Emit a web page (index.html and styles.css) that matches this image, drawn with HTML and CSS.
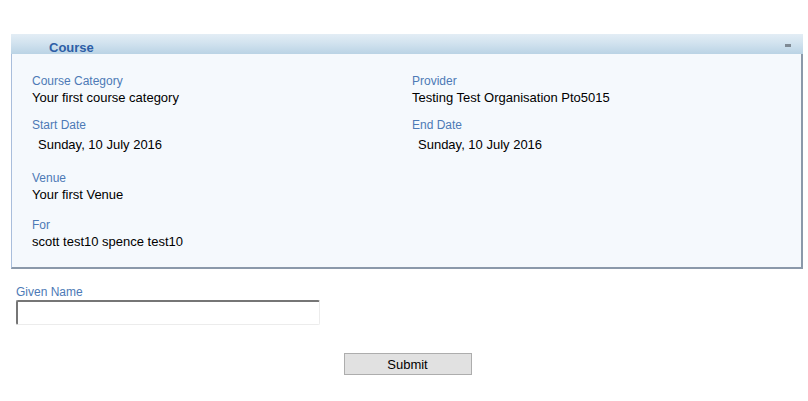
FILE: index.html
```html
<!DOCTYPE html>
<html lang="en">
<head>
<meta charset="utf-8">
<title>Course</title>
<link rel="stylesheet" href="styles.css">
</head>
<body>
<div class="page">
  <section class="panel">
    <header class="panel-head">
      <span class="panel-title">Course</span>
      <span class="collapse" aria-label="collapse"></span>
    </header>
    <div class="panel-body">
      <div class="row">
        <div class="field">
          <div class="label">Course Category</div>
          <div class="value">Your first course category</div>
        </div>
        <div class="field">
          <div class="label">Provider</div>
          <div class="value">Testing Test Organisation Pto5015</div>
        </div>
      </div>
      <div class="row">
        <div class="field">
          <div class="label">Start Date</div>
          <div class="value date">Sunday, 10 July 2016</div>
        </div>
        <div class="field">
          <div class="label">End Date</div>
          <div class="value date">Sunday, 10 July 2016</div>
        </div>
      </div>
      <div class="row row-loose">
        <div class="field">
          <div class="label">Venue</div>
          <div class="value">Your first Venue</div>
        </div>
      </div>
      <div class="row">
        <div class="field">
          <div class="label">For</div>
          <div class="value">scott test10 spence test10</div>
        </div>
      </div>
    </div>
  </section>

  <form class="form" onsubmit="return false">
    <label class="label form-label" for="given">Given Name</label>
    <input class="text-input" id="given" type="text">
    <div class="actions">
      <button class="submit" type="submit">Submit</button>
    </div>
  </form>
</div>
</body>
</html>
```

FILE: styles.css
```css
html, body {
  margin: 0;
  padding: 0;
  background: #ffffff;
}

body {
  font-family: "Liberation Sans", Arial, sans-serif;
  color: #000;
}

.page {
  padding: 34px 5px 0 11px;
}

.panel {
  width: 792px;
  box-sizing: border-box;
}

.panel-head {
  display: flex;
  justify-content: space-between;
  align-items: flex-start;
  height: 20px;
  box-sizing: border-box;
  padding: 7px 12px 0 38px;
  background: linear-gradient(to bottom, #e3edf5 0%, #d2e3ef 45%, #bad3e5 100%);
}

.panel-title {
  font-size: 13px;
  font-weight: bold;
  line-height: 13px;
  color: #2d5ea6;
}

.collapse {
  display: block;
  width: 6px;
  height: 3px;
  margin-top: 3px;
  background: #7f8a94;
}

.panel-body {
  background: #f5f9fd;
  border-left: 1px solid #a9bedc;
  border-right: 2px solid #8b99aa;
  border-bottom: 2px solid #8b99aa;
  padding: 20px 20px 16px 20px;
}

.row {
  display: grid;
  grid-template-columns: 380px 1fr;
  margin-bottom: 11px;
}

.row:last-child {
  margin-bottom: 0;
}

.row-loose {
  margin-bottom: 14px;
}

.label {
  display: block;
  font-size: 12px;
  line-height: 14px;
  color: #4d7ab6;
}

.value {
  font-size: 13px;
  line-height: 19px;
  color: #000;
}

.value.date {
  padding: 3px 6px 6px 6px;
}

.form {
  padding: 16px 0 0 5px;
  width: 787px;
}

.form-label {
  margin-bottom: 1px;
}

.text-input {
  display: block;
  box-sizing: border-box;
  width: 304px;
  height: 25px;
  margin: 0;
  padding: 2px 4px;
  border-top: 2px solid #767676;
  border-left: 2px solid #767676;
  border-right: 1px solid #ececec;
  border-bottom: 1px solid #ececec;
  border-radius: 2px;
  background: #fff;
  font-family: "Liberation Sans", Arial, sans-serif;
  font-size: 13px;
  outline: none;
}

.actions {
  display: flex;
  justify-content: center;
  margin-top: 28px;
  margin-left: -4px;
}

.submit {
  width: 128px;
  height: 22px;
  box-sizing: border-box;
  margin: 0;
  padding: 1px 0 0 0;
  background: #e1e1e1;
  border: 1px solid #adadad;
  border-radius: 0;
  font-family: "Liberation Sans", Arial, sans-serif;
  font-size: 13px;
  line-height: 19px;
  color: #000;
}
```
